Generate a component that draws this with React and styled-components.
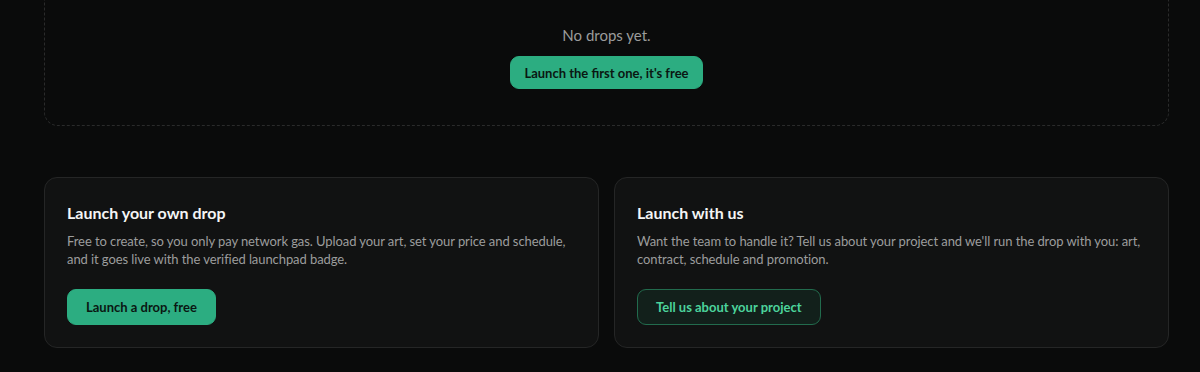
import React from 'react'
import styled, { createGlobalStyle } from 'styled-components'

const GlobalStyle = createGlobalStyle`
  html, body {
    margin: 0;
    padding: 0;
    background: #0a0b0b;
    font-family: Lato, 'Noto Sans', sans-serif;
    overflow: hidden;
  }
`

const Page = styled.div`
  padding: 0 31px 0 44px;
`

const EmptyPanel = styled.section`
  margin-top: -42px;
  padding: 65px 20px 36px;
  border: 1px dashed #2a2b2b;
  border-radius: 14px;
  display: flex;
  flex-direction: column;
  align-items: center;
  gap: 10px;
`

const EmptyText = styled.p`
  margin: 0;
  font-size: 15px;
  line-height: 22px;
  color: #9b9c9c;
`

const Button = styled.button`
  font-family: inherit;
  font-size: 13px;
  font-weight: 700;
  border-radius: 9px;
  cursor: pointer;
  padding: 0 ${p => p.$px || 18}px;
  height: ${p => p.$h || 36}px;
  background: ${p => (p.$outline ? '#12201b' : '#2cad81')};
  color: ${p => (p.$outline ? '#4cd39c' : '#0a1712')};
  border: 1px solid ${p => (p.$outline ? '#226b4d' : '#2cad81')};
`

const CardGrid = styled.div`
  display: grid;
  grid-template-columns: 1fr 1fr;
  gap: 15px;
  margin-top: 51px;
`

const Card = styled.article`
  background: #111212;
  border: 1px solid #252626;
  border-radius: 13px;
  padding: 24px 22px 22px;
  display: flex;
  flex-direction: column;
  align-items: flex-start;
`

const CardTitle = styled.h3`
  margin: 0;
  font-size: 16px;
  line-height: 22px;
  font-weight: 700;
  color: #f4f5f5;
`

const CardText = styled.p`
  margin: 8px 0 21px;
  font-size: 13px;
  line-height: 18px;
  letter-spacing: -0.08px;
  color: #9c9d9d;
`

export default function App() {
  return (
    <>
      <GlobalStyle />
      <Page>
        <EmptyPanel>
          <EmptyText>No drops yet.</EmptyText>
          <Button $h={33} $px={13}>Launch the first one, it's free</Button>
        </EmptyPanel>
        <CardGrid>
          <Card>
            <CardTitle>Launch your own drop</CardTitle>
            <CardText>
              Free to create, so you only pay network gas. Upload your art, set your price and schedule,
              and it goes live with the verified launchpad badge.
            </CardText>
            <Button>Launch a drop, free</Button>
          </Card>
          <Card>
            <CardTitle>Launch with us</CardTitle>
            <CardText>
              Want the team to handle it? Tell us about your project and we'll run the drop with you: art,
              contract, schedule and promotion.
            </CardText>
            <Button $outline>Tell us about your project</Button>
          </Card>
        </CardGrid>
      </Page>
    </>
  )
}
